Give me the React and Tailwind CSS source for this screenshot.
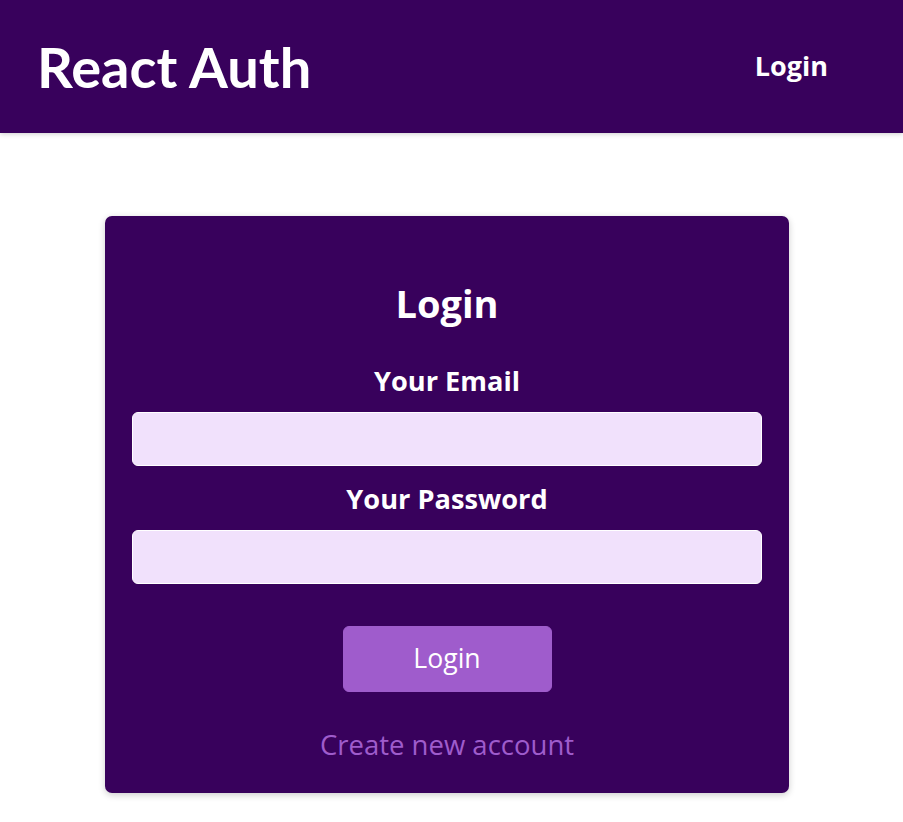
import React, { useState } from 'react';

const MainNavigation = () => {
  return (
    <header className="h-[133px] bg-[#38015c] flex items-center justify-between pl-[37px] pr-[75px] shadow-[0_1px_5px_rgba(0,0,0,0.2)] relative">
      <div className="text-[56px] font-bold text-white leading-none font-['Lato',sans-serif]">React Auth</div>
      <nav>
        <ul className="flex items-center">
          <li>
            <a href="#" className="text-white font-bold text-[27px]">
              Login
            </a>
          </li>
        </ul>
      </nav>
    </header>
  );
};

const AuthForm = () => {
  const [email, setEmail] = useState('');
  const [password, setPassword] = useState('');

  const handleSubmit = (e) => {
    e.preventDefault();
  };

  return (
    <section className="mt-[83px] ml-[105px] w-[684px] rounded-[7px] bg-[#38015c] shadow-[0_2px_7px_rgba(0,0,0,0.2)] px-[27px] pt-[27px] pb-[27px] text-center">
      <h1 className="mt-[33px] text-[38px] leading-[54px] font-bold text-white">Login</h1>
      <form onSubmit={handleSubmit}>
        <div className="mt-[31px] mb-[13px]">
          <label htmlFor="email" className="block text-white font-bold leading-[40px] mb-[11px] text-[27.2px]">
            Your Email
          </label>
          <input
            type="email"
            id="email"
            value={email}
            onChange={(e) => setEmail(e.target.value)}
            className="block w-full h-[54px] bg-[#f1e1fc] text-[#38015c] rounded-[6px] border border-white px-[7px] text-left outline-none"
          />
        </div>
        <div className="mb-[13px]">
          <label htmlFor="password" className="block text-white font-bold leading-[40px] mb-[11px] text-[27.2px]">
            Your Password
          </label>
          <input
            type="password"
            id="password"
            value={password}
            onChange={(e) => setPassword(e.target.value)}
            className="block w-full h-[54px] bg-[#f1e1fc] text-[#38015c] rounded-[6px] border border-white px-[7px] text-left outline-none"
          />
        </div>
        <div className="mt-[42px] flex flex-col items-center">
          <button
            type="submit"
            className="w-[209px] h-[66px] text-white bg-[#9f5ccc] border border-[#9f5ccc] rounded-[6px] cursor-pointer"
          >
            Login
          </button>
          <button
            type="button"
            className="mt-[32px] bg-transparent text-[#9f5ccc] text-[27.5px] px-[40px] py-[1px] leading-[40px] cursor-pointer"
          >
            Create new account
          </button>
        </div>
      </form>
    </section>
  );
};

export default function App() {
  return (
    <div className="min-h-screen bg-white text-[26.6px] leading-normal font-['Open_Sans',sans-serif]">
      <MainNavigation />
      <main>
        <AuthForm />
      </main>
    </div>
  );
}
